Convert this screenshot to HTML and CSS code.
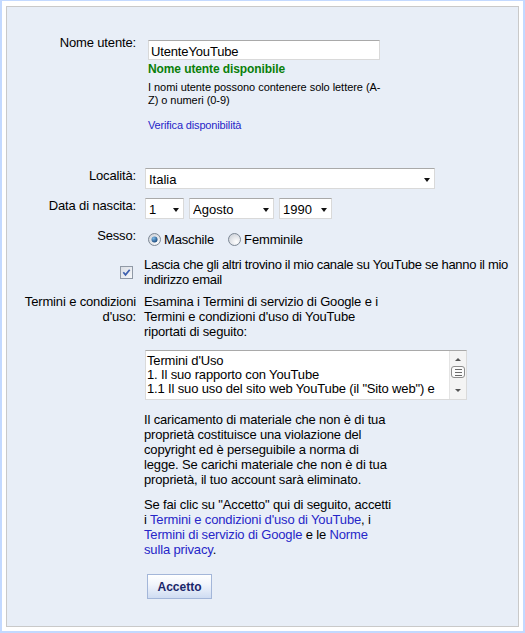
FILE: index.html
```html
<!DOCTYPE html>
<html lang="it">
<head>
<meta charset="utf-8">
<title>Registrazione YouTube</title>
<link rel="stylesheet" href="styles.css">
</head>
<body>
<div class="frame">
  <div class="panel">
    <div class="row row-user">
      <label class="lbl">Nome utente:</label>
      <div class="field">
        <input class="text-input" type="text" value="UtenteYouTube">
        <div class="status">Nome utente disponibile</div>
        <div class="hint">I nomi utente possono contenere solo lettere (A-<br>Z) o numeri (0-9)</div>
        <a class="link check-link" href="#">Verifica disponibilità</a>
      </div>
    </div>

    <div class="row row-loc">
      <label class="lbl">Località:</label>
      <div class="field">
        <span class="select sel-loc"><select><option>Italia</option></select></span>
      </div>
    </div>

    <div class="row row-date">
      <label class="lbl">Data di nascita:</label>
      <div class="field">
        <span class="select sel-day"><select><option>1</option></select></span><span class="select sel-month"><select><option>Agosto</option></select></span><span class="select sel-year"><select><option>1990</option></select></span>
      </div>
    </div>

    <div class="row row-sex">
      <label class="lbl">Sesso:</label>
      <div class="field sex-field">
        <span class="radio">
          <svg width="13" height="13" viewBox="0 0 13 13"><defs><radialGradient id="rb1" cx="0.65" cy="0.7" r="0.75"><stop offset="0" stop-color="#ffffff"/><stop offset="1" stop-color="#cfd3da"/></radialGradient><radialGradient id="rd1" cx="0.35" cy="0.3" r="0.8"><stop offset="0" stop-color="#7dbbea"/><stop offset="1" stop-color="#123f73"/></radialGradient></defs><circle cx="6.5" cy="6.5" r="6" fill="url(#rb1)" stroke="#7c8794"/><circle cx="6.5" cy="6.5" r="3" fill="url(#rd1)"/></svg>
        </span>
        <span class="radio-text">Maschile</span>
        <span class="radio radio-second">
          <svg width="13" height="13" viewBox="0 0 13 13"><defs><radialGradient id="rb2" cx="0.65" cy="0.7" r="0.75"><stop offset="0" stop-color="#ffffff"/><stop offset="1" stop-color="#cfd3da"/></radialGradient></defs><circle cx="6.5" cy="6.5" r="6" fill="url(#rb2)" stroke="#7c8794"/></svg>
        </span>
        <span class="radio-text">Femminile</span>
      </div>
    </div>

    <div class="row row-check">
      <div class="lbl check-cell">
        <svg class="checkbox" width="13" height="13" viewBox="0 0 13 13"><defs><linearGradient id="cb" x1="0" y1="0" x2="1" y2="1"><stop offset="0" stop-color="#d9dde5"/><stop offset="1" stop-color="#f8f9fb"/></linearGradient></defs><rect x="0.5" y="0.5" width="12" height="12" fill="url(#cb)" stroke="#9099a6"/><path d="M3.3 6.3 L5.5 8.9 L9.7 3.7" fill="none" stroke="#3d5fae" stroke-width="1.7"/></svg>
      </div>
      <div class="field check-text">Lascia che gli altri trovino il mio canale su YouTube se hanno il mio<br>indirizzo email</div>
    </div>

    <div class="row row-terms">
      <label class="lbl">Termini e condizioni d'uso:</label>
      <div class="field">
        <div class="terms-intro">Esamina i Termini di servizio di Google e i<br>Termini e condizioni d'uso di YouTube<br>riportati di seguito:</div>
        <div class="terms-box">
          <div class="terms-text">Termini d'Uso<br>1. Il suo rapporto con YouTube<br>1.1 Il suo uso del sito web YouTube (il "Sito web") e</div>
          <div class="scrollbar">
            <span class="arrow-up"></span>
            <span class="thumb"><i></i><i></i><i></i></span>
            <span class="arrow-down"></span>
          </div>
        </div>
        <p class="terms-p p-first">Il caricamento di materiale che non è di tua<br>proprietà costituisce una violazione del<br>copyright ed è perseguibile a norma di<br>legge. Se carichi materiale che non è di tua<br>proprietà, il tuo account sarà eliminato.</p>
        <p class="terms-p p-second">Se fai clic su "Accetto" qui di seguito, accetti<br>i <a class="link" href="#">Termini e condizioni d'uso di YouTube</a>, i<br><a class="link" href="#">Termini di servizio di Google</a> e le <a class="link" href="#">Norme</a><br><a class="link" href="#">sulla privacy</a>.</p>
        <button class="btn" type="button">Accetto</button>
      </div>
    </div>
  </div>
</div>
</body>
</html>
```

FILE: styles.css
```css
* {
  box-sizing: border-box;
}

html, body {
  margin: 0;
  padding: 0;
}

body {
  font-family: "Liberation Sans", Arial, sans-serif;
  font-size: 13px;
  line-height: 15px;
  letter-spacing: -0.15px;
  color: #000;
  background: #fff;
}

.frame {
  width: 525px;
  height: 633px;
  border-style: solid;
  border-color: #c3d9ff;
  border-width: 1px 2px 2px 2px;
  padding: 5px 4px 4px 4px;
  background: #fff;
}

.panel {
  height: 100%;
  border: 1px solid #c9c9c9;
  background: #e8eef7;
  padding-top: 28px;
  overflow: hidden;
}

.row {
  display: grid;
  grid-template-columns: 129px 1fr;
  column-gap: 8px;
}

.lbl {
  text-align: right;
}

.link {
  color: #2626c8;
  text-decoration: none;
}

/* username */
.text-input {
  display: block;
  margin: 5px 0 0 4px;
  width: 232px;
  height: 20px;
  border: 1px solid #d9d9d9;
  border-top-color: #a9a9a9;
  padding: 3px 2px 0 2px;
  font-family: "Liberation Sans", Arial, sans-serif;
  font-size: 13px;
  line-height: 15px;
  letter-spacing: -0.15px;
  color: #000;
  background: #fff;
  outline: none;
}

.status {
  margin: 2px 0 0 4px;
  font-size: 12px;
  line-height: 15px;
  font-weight: bold;
  letter-spacing: -0.1px;
  color: #0a7f0a;
}

.hint {
  margin: 4px 0 0 4px;
  font-size: 11px;
  line-height: 13px;
  letter-spacing: -0.05px;
}

.check-link {
  display: block;
  margin: 12px 0 0 4px;
  font-size: 11px;
  line-height: 13px;
}

/* selects */
.row-loc { margin-top: 36px; }
.row-date { margin-top: 9px; }

.select {
  position: relative;
  display: inline-block;
  vertical-align: top;
  margin-left: 5px;
}

.sel-loc,
.sel-day {
  margin-left: 1px;
}

.select select {
  -webkit-appearance: none;
  appearance: none;
  display: block;
  height: 21px;
  border: 1px solid #d9d9d9;
  border-top-color: #a9a9a9;
  border-radius: 0;
  background: #fff;
  padding: 2px 0 0 3px;
  margin: 0;
  font-family: "Liberation Sans", Arial, sans-serif;
  font-size: 13px;
  line-height: 15px;
  color: #000;
  outline: none;
}

.select::after {
  content: "";
  position: absolute;
  right: 5px;
  top: 10px;
  border-left: 3px solid transparent;
  border-right: 3px solid transparent;
  border-top: 4px solid #111;
  pointer-events: none;
}

.sel-loc select { width: 290px; }
.sel-day select { width: 39px; }
.sel-month select { width: 85px; }
.sel-year select { width: 53px; }

/* sex */
.row-sex { margin-top: 9px; }

.sex-field {
  display: flex;
  align-items: center;
  height: 15px;
  margin-top: 4px;
}

.radio {
  display: block;
  width: 13px;
  height: 13px;
  margin-left: 4px;
  margin-right: 3px;
}

.radio svg {
  display: block;
}

.radio-second {
  margin-left: 14px;
}

/* checkbox row */
.row-check {
  margin-top: 10px;
  align-items: center;
}

.check-cell {
  justify-self: end;
  margin-right: 3px;
}

.checkbox {
  display: block;
}

.check-text {
  white-space: nowrap;
  letter-spacing: -0.3px;
}

/* terms */
.row-terms {
  margin-top: 7px;
}

.terms-intro,
.terms-p {
  white-space: nowrap;
}

.terms-box {
  display: flex;
  margin: 11px 0 0 1px;
  width: 322px;
  height: 50px;
  border: 1px solid #dadada;
  border-top-color: #a9a9a9;
  background: #fff;
}

.terms-text {
  flex: 1;
  padding: 3px 0 0 1px;
  line-height: 14px;
  white-space: nowrap;
  overflow: hidden;
}

.scrollbar {
  width: 17px;
  flex: none;
  display: flex;
  flex-direction: column;
  align-items: center;
  padding-top: 7px;
  background: #f4f4f4;
  border-left: 1px solid #e4e4e4;
}

.arrow-up {
  display: block;
  border-left: 3px solid transparent;
  border-right: 3px solid transparent;
  border-bottom: 3px solid #555;
}

.arrow-down {
  display: block;
  margin-top: 11px;
  border-left: 3px solid transparent;
  border-right: 3px solid transparent;
  border-top: 3px solid #555;
}

.thumb {
  display: flex;
  flex-direction: column;
  align-items: center;
  justify-content: center;
  gap: 2px;
  margin-top: 5px;
  width: 14px;
  height: 12px;
  border: 1px solid #8d8d8d;
  border-radius: 3px;
  background: #fbfbfb;
}

.thumb i {
  display: block;
  width: 7px;
  height: 1px;
  background: #6a6a6a;
}

.terms-p {
  margin: 0;
}

.p-first { margin-top: 12px; }
.p-second { margin-top: 10px; }

.btn {
  display: block;
  margin: 17px 0 0 3px;
  width: 65px;
  height: 25px;
  padding: 0;
  border: 1px solid #a3b6d9;
  border-radius: 0;
  background: linear-gradient(#ffffff, #f1f5fc 40%, #cfdcf2);
  font-family: "Liberation Sans", Arial, sans-serif;
  font-size: 12px;
  font-weight: bold;
  color: #1a276a;
  cursor: pointer;
}
```
